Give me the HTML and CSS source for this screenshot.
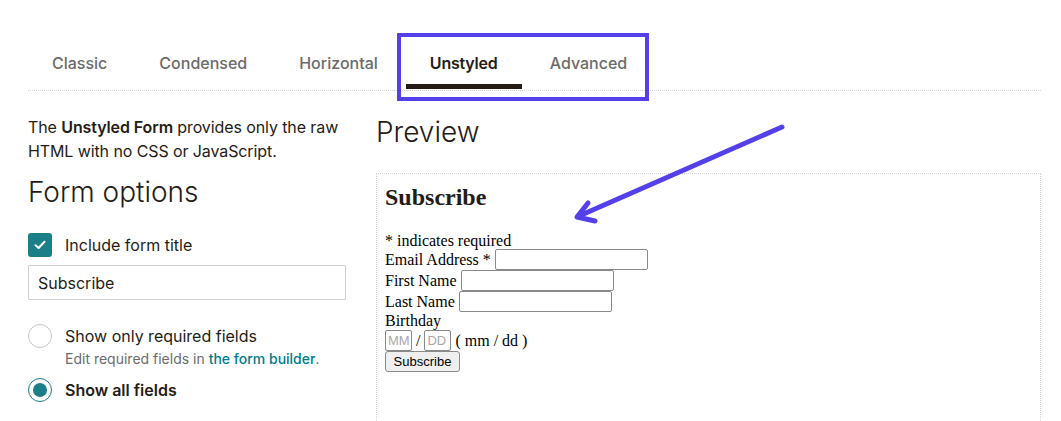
FILE: index.html
```html
<!DOCTYPE html>
<html lang="en">
<head>
<meta charset="utf-8">
<title>Form options</title>
<link rel="stylesheet" href="styles.css">
</head>
<body>
<div class="page">
  <nav class="tabs">
    <span class="tab">Classic</span>
    <span class="tab">Condensed</span>
    <span class="tab">Horizontal</span>
    <span class="tab active">Unstyled</span>
    <span class="tab">Advanced</span>
  </nav>
  <div class="columns">
    <section class="left">
      <p class="intro">The <b>Unstyled Form</b> provides only the raw HTML with no CSS or JavaScript.</p>
      <h2 class="heading">Form options</h2>
      <label class="check-row">
        <span class="checkbox"><svg width="14" height="14" viewBox="0 0 14 14"><path d="M2.5 7.2 L5.6 10 L11.5 3.8" fill="none" stroke="#fff" stroke-width="2" stroke-linecap="round" stroke-linejoin="round"/></svg></span>
        <span>Include form title</span>
      </label>
      <div class="text-input">Subscribe</div>
      <div class="radio-row first">
        <span class="radio"></span>
        <div>
          <div class="radio-label">Show only required fields</div>
          <div class="help">Edit required fields in <a class="link">the form builder</a>.</div>
        </div>
      </div>
      <div class="radio-row">
        <span class="radio on"><span class="dot"></span></span>
        <div class="radio-label strong">Show all fields</div>
      </div>
    </section>
    <section class="right">
      <h2 class="heading">Preview</h2>
      <div class="preview">
        <h2 class="pv-title">Subscribe</h2>
        <div class="pv-line req">* indicates required</div>
        <div class="pv-row">Email Address *&nbsp;<span class="pv-input"></span></div>
        <div class="pv-row">First Name&nbsp;<span class="pv-input"></span></div>
        <div class="pv-row">Last Name&nbsp;<span class="pv-input"></span></div>
        <div class="pv-line">Birthday</div>
        <div class="pv-row"><span class="pv-input small">MM</span>&nbsp;/&nbsp;<span class="pv-input small">DD</span>&nbsp;( mm / dd )</div>
        <div class="pv-row"><span class="pv-button">Subscribe</span></div>
      </div>
    </section>
  </div>
  <div class="highlight"></div>
  <svg class="arrow" width="1061" height="421" viewBox="0 0 1061 421">
    <path d="M782 127 L579 216" stroke="#5440e8" stroke-width="5" stroke-linecap="round" fill="none"/>
    <path d="M588 203 L577 217 L595 221" stroke="#5440e8" stroke-width="5" stroke-linecap="round" stroke-linejoin="round" fill="none"/>
  </svg>
</div>
</body>
</html>
```

FILE: styles.css
```css
* { box-sizing: border-box; }
html, body { margin: 0; padding: 0; background: #fff; }
body {
  font-family: Inter, "Liberation Sans", sans-serif;
  color: #241c15;
  width: 1061px;
  height: 421px;
  overflow: hidden;
}
.page {
  position: relative;
  padding: 0 20px 0 28px;
}
.tabs {
  display: flex;
  gap: 4px;
  padding-top: 52px;
  padding-bottom: 1px;
  border-bottom: 1px dotted #d4d4d4;
}
.tab {
  font-size: 16px;
  font-weight: 500;
  line-height: 23px;
  color: #6b6b6b;
  padding: 0 24px 9px;
  border-bottom: 5px solid transparent;
}
.tab.active {
  color: #241c15;
  border-bottom-color: #241c15;
  font-weight: 600;
  letter-spacing: -0.2px;
}
.columns {
  display: flex;
  gap: 30px;
}
.left { width: 318px; }
.right { flex: 1; }
.intro {
  margin: 24px 0 0;
  font-size: 16px;
  line-height: 24px;
  letter-spacing: -0.1px;
}
.intro b { font-weight: 600; }
.heading {
  margin: 11px 0 0;
  font-size: 28px;
  font-weight: 300;
  line-height: 36px;
}
.right .heading { margin-top: 23px; }
.check-row {
  display: flex;
  align-items: center;
  gap: 13px;
  margin-top: 23px;
  font-size: 16px;
  line-height: 24px;
}
.checkbox {
  width: 24px;
  height: 24px;
  border-radius: 3px;
  background: #1a7f87;
  display: flex;
  align-items: center;
  justify-content: center;
}
.text-input {
  margin-top: 8px;
  height: 35px;
  border: 1px solid #cfcfcf;
  border-radius: 1px;
  padding: 0 9px;
  font-size: 16px;
  line-height: 35px;
}
.radio-row {
  display: flex;
  gap: 13px;
  align-items: flex-start;
  font-size: 16px;
  line-height: 24px;
}
.radio-row.first { margin-top: 24px; }
.radio-row + .radio-row { margin-top: 9px; align-items: center; }
.radio {
  width: 24px;
  height: 24px;
  border-radius: 50%;
  border: 1px solid #c6c6c6;
  flex: none;
  display: flex;
  align-items: center;
  justify-content: center;
}
.radio.on { border-color: #1a7f87; }
.dot {
  width: 14px;
  height: 14px;
  border-radius: 50%;
  background: #1a7f87;
}
.radio-label.strong { font-weight: 600; }
.help {
  font-size: 14px;
  line-height: 20px;
  color: #6b6b6b;
  margin-top: 1px;
}
.link { color: #007c89; font-weight: 500; }
.preview {
  margin-top: 23px;
  height: 260px;
  border: 1px dotted #d4d4d4;
  padding: 10px 8px;
  font-family: "Liberation Serif", serif;
  font-size: 16px;
  color: #000;
}
.pv-title {
  margin: 0;
  font-size: 24px;
  font-weight: bold;
  line-height: 27px;
  color: #241c15;
  height: 48px;
}
.pv-line { height: 18px; line-height: 18px; }
.pv-line.req { height: 17px; }
.pv-row {
  height: 21px;
  display: flex;
  align-items: center;
  white-space: nowrap;
}
.pv-input {
  display: inline-block;
  width: 153px;
  height: 21px;
  border: 1px solid #8a8a8a;
  border-radius: 2px;
  background: #fff;
}
.pv-input.small {
  width: 27px;
  font-family: "Liberation Sans", sans-serif;
  font-size: 13px;
  line-height: 19px;
  color: #a8a8a8;
  padding-left: 2px;
  overflow: hidden;
}
.pv-button {
  display: inline-block;
  width: 75px;
  height: 21px;
  border: 1px solid #8a8a8a;
  border-radius: 3px;
  background: #efefef;
  font-family: "Liberation Sans", sans-serif;
  font-size: 13px;
  line-height: 19px;
  text-align: center;
  color: #000;
}
.highlight {
  position: absolute;
  left: 397px;
  top: 33px;
  width: 252px;
  height: 68px;
  border: 4px solid #5440e8;
}
.arrow {
  position: absolute;
  left: 0;
  top: 0;
  pointer-events: none;
}
```
